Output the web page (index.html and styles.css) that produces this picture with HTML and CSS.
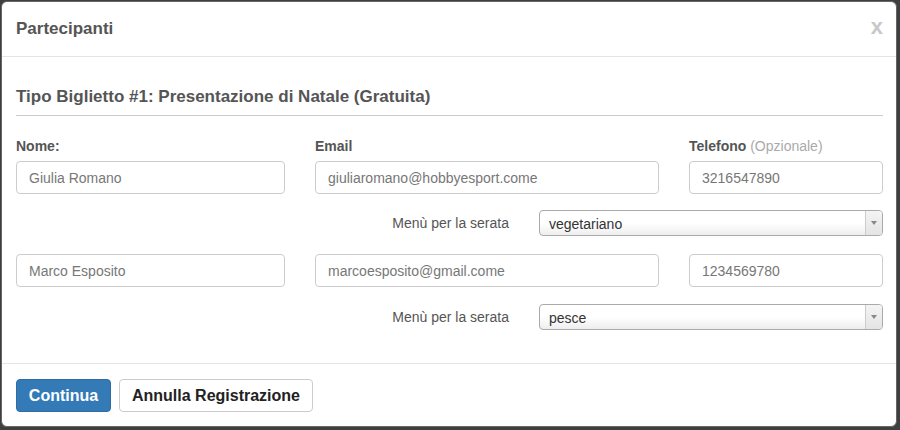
FILE: index.html
```html
<!DOCTYPE html>
<html lang="it">
<head>
<meta charset="utf-8">
<title>Partecipanti</title>
<link rel="stylesheet" href="styles.css">
</head>
<body>
<div class="modal">
  <div class="modal-header">
    <h4 class="modal-title">Partecipanti</h4>
    <span class="close">x</span>
  </div>
  <div class="modal-body">
    <h3 class="ticket-title">Tipo Biglietto #1: Presentazione di Natale (Gratuita)</h3>
    <div class="grid">
      <label class="lbl">Nome:</label>
      <label class="lbl">Email</label>
      <label class="lbl">Telefono <span class="opt">(Opzionale)</span></label>

      <div class="input">Giulia Romano</div>
      <div class="input">giuliaromano@hobbyesport.come</div>
      <div class="input">3216547890</div>

      <div class="menu-row">
        <span class="menu-lbl">Menù per la serata</span>
        <div class="select"><span class="sel-text">vegetariano</span><span class="arrow"></span></div>
      </div>

      <div class="input row2">Marco Esposito</div>
      <div class="input row2">marcoesposito@gmail.come</div>
      <div class="input row2">1234569780</div>

      <div class="menu-row last">
        <span class="menu-lbl">Menù per la serata</span>
        <div class="select"><span class="sel-text">pesce</span><span class="arrow"></span></div>
      </div>
    </div>
  </div>
  <div class="modal-footer">
    <button class="btn btn-primary">Continua</button>
    <button class="btn btn-default">Annulla Registrazione</button>
  </div>
</div>
</body>
</html>
```

FILE: styles.css
```css
html, body {
  margin: 0;
  padding: 0;
}
body {
  background: #3f3f3f;
  font-family: "Liberation Sans", Arial, sans-serif;
  width: 900px;
  height: 430px;
  overflow: hidden;
}
.modal {
  margin: 1px 0 0 1px;
  width: 896px;
  height: 426px;
  box-sizing: border-box;
  background: #fff;
  border: 1px solid #666;
  border-radius: 6px;
  overflow: hidden;
}
.modal-header {
  height: 55px;
  box-sizing: border-box;
  border-bottom: 1px solid #e5e5e5;
  padding: 0 13px 0 14px;
  display: flex;
  align-items: center;
  justify-content: space-between;
}
.modal-title {
  margin: 0;
  font-size: 17px;
  font-weight: bold;
  color: #555;
}
.close {
  font-size: 22px;
  font-weight: bold;
  color: #c8c8c8;
  line-height: 1;
  margin-top: -4px;
}
.modal-body {
  padding: 30px 13px 33px 14px;
}
.ticket-title {
  margin: 0;
  font-size: 17px;
  line-height: 20px;
  font-weight: bold;
  color: #555;
  padding-bottom: 8px;
  border-bottom: 1px solid #ccc;
}
.grid {
  display: grid;
  grid-template-columns: 269px 344px 194px;
  column-gap: 30px;
  padding-top: 22px;
}
.lbl {
  font-size: 14px;
  line-height: 16px;
  font-weight: bold;
  color: #555;
  margin-bottom: 7px;
}
.opt {
  font-weight: normal;
  color: #aaa;
}
.input {
  height: 33px;
  box-sizing: border-box;
  border: 1px solid #ccc;
  border-radius: 4px;
  padding: 0 12px;
  font-size: 14px;
  color: #777;
  display: flex;
  align-items: center;
}
.input.row2 {
  margin-top: 18px;
}
.menu-row {
  grid-column: 1 / 4;
  display: flex;
  justify-content: flex-end;
  align-items: center;
  gap: 30px;
  margin-top: 16px;
}
.menu-row.last {
  margin-top: 17px;
}
.menu-lbl {
  font-size: 14px;
  color: #555;
}
.select {
  width: 344px;
  height: 26px;
  box-sizing: border-box;
  border: 1px solid #aaa;
  border-radius: 4px;
  background: linear-gradient(#fff 0%, #fff 50%, #eee 100%);
  display: flex;
  align-items: center;
  padding-left: 9px;
  overflow: hidden;
}
.sel-text {
  flex: 1;
  font-size: 14px;
  color: #333;
  padding-top: 2px;
}
.arrow {
  width: 17px;
  height: 100%;
  box-sizing: border-box;
  border-left: 1px solid #ccc;
  background: linear-gradient(#f4f4f4, #e4e4e4);
  position: relative;
}
.arrow::after {
  content: "";
  position: absolute;
  left: 5px;
  top: 10px;
  border-left: 3px solid transparent;
  border-right: 3px solid transparent;
  border-top: 4px solid #888;
}
.modal-footer {
  border-top: 1px solid #e5e5e5;
  padding: 15px 14px;
  display: flex;
  gap: 8px;
}
.btn {
  height: 33px;
  box-sizing: border-box;
  border-radius: 4px;
  font-family: "Liberation Sans", Arial, sans-serif;
  font-size: 16px;
  font-weight: bold;
  padding: 0;
  margin: 0;
  cursor: pointer;
}
.btn-primary {
  background: #337ab7;
  border: 1px solid #2e6da4;
  color: #fff;
  width: 95px;
}
.btn-default {
  background: #fff;
  border: 1px solid #ccc;
  color: #222;
  width: 194px;
}
```
